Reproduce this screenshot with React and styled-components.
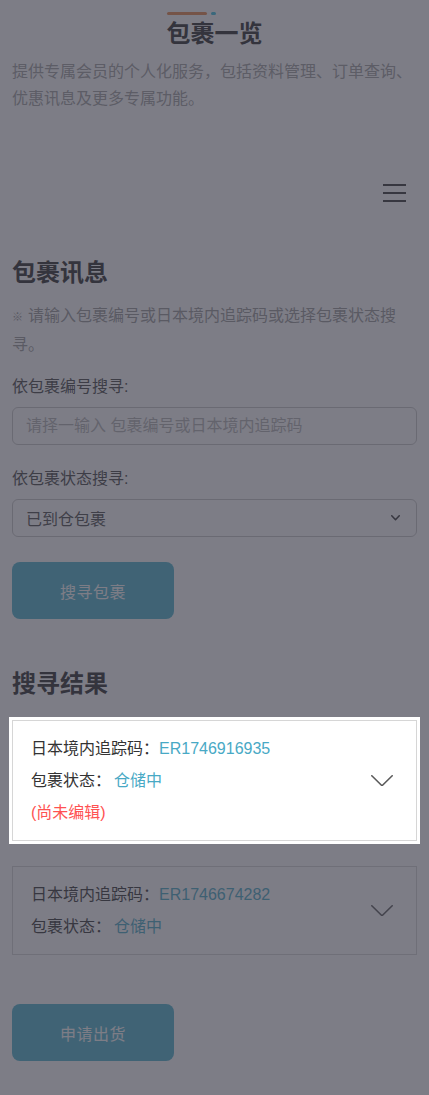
import React from "react";
import styled, { createGlobalStyle } from "styled-components";

const Global = createGlobalStyle`
  html, body { margin: 0; padding: 0; background: #fff; }
  body {
    font-family: "Liberation Sans", "Noto Sans CJK SC", sans-serif;
    color: #333;
    -webkit-font-smoothing: antialiased;
  }
  * { box-sizing: border-box; }
`;

const Page = styled.div`
  padding: 0 12px 35px;
  min-height: 1095px;
`;

const Header = styled.header`
  text-align: center;
`;

const TitleBlock = styled.div`
  display: inline-flex;
  flex-direction: column;
  align-items: flex-start;
  padding-top: 12px;
`;

const Deco = styled.div`
  display: flex;
  gap: 4px;
  height: 3px;
`;

const DecoBar = styled.span`
  width: ${(p) => p.$w}px;
  height: 3px;
  border-radius: 2px;
  background: ${(p) => p.$color};
`;

const Title = styled.h1`
  margin: 3px 0 0;
  font-size: 24px;
  line-height: 32px;
  font-weight: 700;
  color: #2a2a2a;
`;

const Desc = styled.p`
  margin: 8px 0 0;
  text-align: left;
  font-size: 16px;
  line-height: 27px;
  color: #a0a0a0;
`;

const NavBar = styled.nav`
  margin-top: 59px;
  height: 44px;
  display: flex;
  justify-content: flex-end;
  align-items: center;
  padding-right: 11px;
`;

const Burger = styled.button`
  width: 23px;
  height: 18px;
  padding: 0;
  border: 0;
  background: none;
  display: flex;
  flex-direction: column;
  justify-content: space-between;
  cursor: pointer;
`;

const BurgerLine = styled.span`
  display: block;
  height: 1.6px;
  width: 100%;
  background: #333;
`;

const SectionTitle = styled.h2`
  margin: ${(p) => p.$mt}px 0 0;
  font-size: 24px;
  line-height: 36px;
  font-weight: 700;
  color: #2a2a2a;
`;

const Note = styled.p`
  margin: 11px 0 0;
  font-size: 16px;
  line-height: 27px;
  color: #999;
`;

const NoteMark = styled.span`
  font-size: 11px;
  margin-right: 5px;
`;

const FieldLabel = styled.label`
  display: block;
  margin-top: ${(p) => p.$mt}px;
  font-size: 16px;
  line-height: 24px;
  color: #444;
`;

const TextInput = styled.input`
  display: block;
  width: 100%;
  height: 38px;
  margin-top: 8px;
  padding: 0 13px;
  border: 1px solid #c8c8c8;
  border-radius: 6px;
  font-family: inherit;
  font-size: 16px;
  color: #333;
  background: #fff;
  outline: none;
  &::placeholder {
    color: #b4b4b4;
  }
`;

const SelectBox = styled.div`
  margin-top: 8px;
  height: 38px;
  display: flex;
  align-items: center;
  justify-content: space-between;
  padding: 0 16px 0 13px;
  border: 1px solid #c8c8c8;
  border-radius: 6px;
  font-size: 16px;
  color: #4a4a4a;
  background: #fff;
`;

const PrimaryButton = styled.button`
  display: block;
  margin-top: ${(p) => p.$mt}px;
  width: 162px;
  height: 57px;
  border: 0;
  border-radius: 8px;
  background: #4cb3ce;
  color: #fff;
  font-family: inherit;
  font-size: 16px;
  letter-spacing: 0.5px;
  cursor: pointer;
`;

const Card = styled.div`
  margin-top: ${(p) => p.$mt}px;
  display: flex;
  align-items: center;
  justify-content: space-between;
  padding: 11.5px 23px 11.5px 18px;
  border: 1px solid #d6d6d6;
  background: #fff;
  ${(p) =>
    p.$spotlight &&
    `
    position: relative;
    z-index: 10;
    box-shadow: 0 0 0 3px #fff, 0 0 0 3000px rgba(58, 58, 71, 0.66);
  `}
`;

const CardInfo = styled.div`
  display: flex;
  flex-direction: column;
`;

const InfoRow = styled.div`
  font-size: 16px;
  line-height: 32px;
  color: #333;
  white-space: nowrap;
`;

const InfoValue = styled.span`
  margin-left: ${(p) => p.$gap || 0}px;
  color: #48a9c5;
`;

const Warn = styled.div`
  font-size: 16px;
  line-height: 32px;
  color: #ff5252;
`;

const ChevronDown = ({ w, h, color, sw }) => (
  <svg width={w} height={h} viewBox={`0 0 ${w} ${h}`} fill="none">
    <polyline
      points={`${sw / 2},${sw / 2} ${w / 2},${h - sw / 2} ${w - sw / 2},${sw / 2}`}
      stroke={color}
      strokeWidth={sw}
      strokeLinecap="round"
      strokeLinejoin="round"
    />
  </svg>
);

const packages = [
  { code: "ER1746916935", status: "仓储中", unedited: true },
  { code: "ER1746674282", status: "仓储中", unedited: false },
];

export default function App() {
  return (
    <>
      <Global />
      <Page>
        <Header>
          <TitleBlock>
            <Deco>
              <DecoBar $w={40} $color="#e8864a" />
              <DecoBar $w={5} $color="#3cc0e0" />
            </Deco>
            <Title>包裹一览</Title>
          </TitleBlock>
          <Desc>
            提供专属会员的个人化服务，包括资料管理、订单查询、优惠讯息及更多专属功能。
          </Desc>
        </Header>

        <NavBar>
          <Burger aria-label="menu">
            <BurgerLine />
            <BurgerLine />
            <BurgerLine />
          </Burger>
        </NavBar>

        <SectionTitle $mt={40}>包裹讯息</SectionTitle>
        <Note>
          <NoteMark>※</NoteMark>请输入包裹编号或日本境内追踪码或选择包裹状态搜寻。
        </Note>

        <FieldLabel $mt={17}>依包裹编号搜寻:</FieldLabel>
        <TextInput placeholder="请择一输入 包裹编号或日本境内追踪码" />

        <FieldLabel $mt={22}>依包裹状态搜寻:</FieldLabel>
        <SelectBox>
          <span>已到仓包裹</span>
          <ChevronDown w={9} h={5.5} color="#333" sw={1.5} />
        </SelectBox>

        <PrimaryButton $mt={25}>搜寻包裹</PrimaryButton>

        <SectionTitle $mt={47}>搜寻结果</SectionTitle>

        {packages.map((p, i) => (
          <Card key={p.code} $mt={i === 0 ? 18 : 25} $spotlight={i === 0}>
            <CardInfo>
              <InfoRow>
                日本境内追踪码：<InfoValue>{p.code}</InfoValue>
              </InfoRow>
              <InfoRow>
                包裹状态：<InfoValue $gap={3}>{p.status}</InfoValue>
              </InfoRow>
              {p.unedited && <Warn>(尚未编辑)</Warn>}
            </CardInfo>
            <ChevronDown w={22} h={11.5} color="#5a5a5a" sw={1.6} />
          </Card>
        ))}

        <PrimaryButton $mt={49}>申请出货</PrimaryButton>
      </Page>
    </>
  );
}
